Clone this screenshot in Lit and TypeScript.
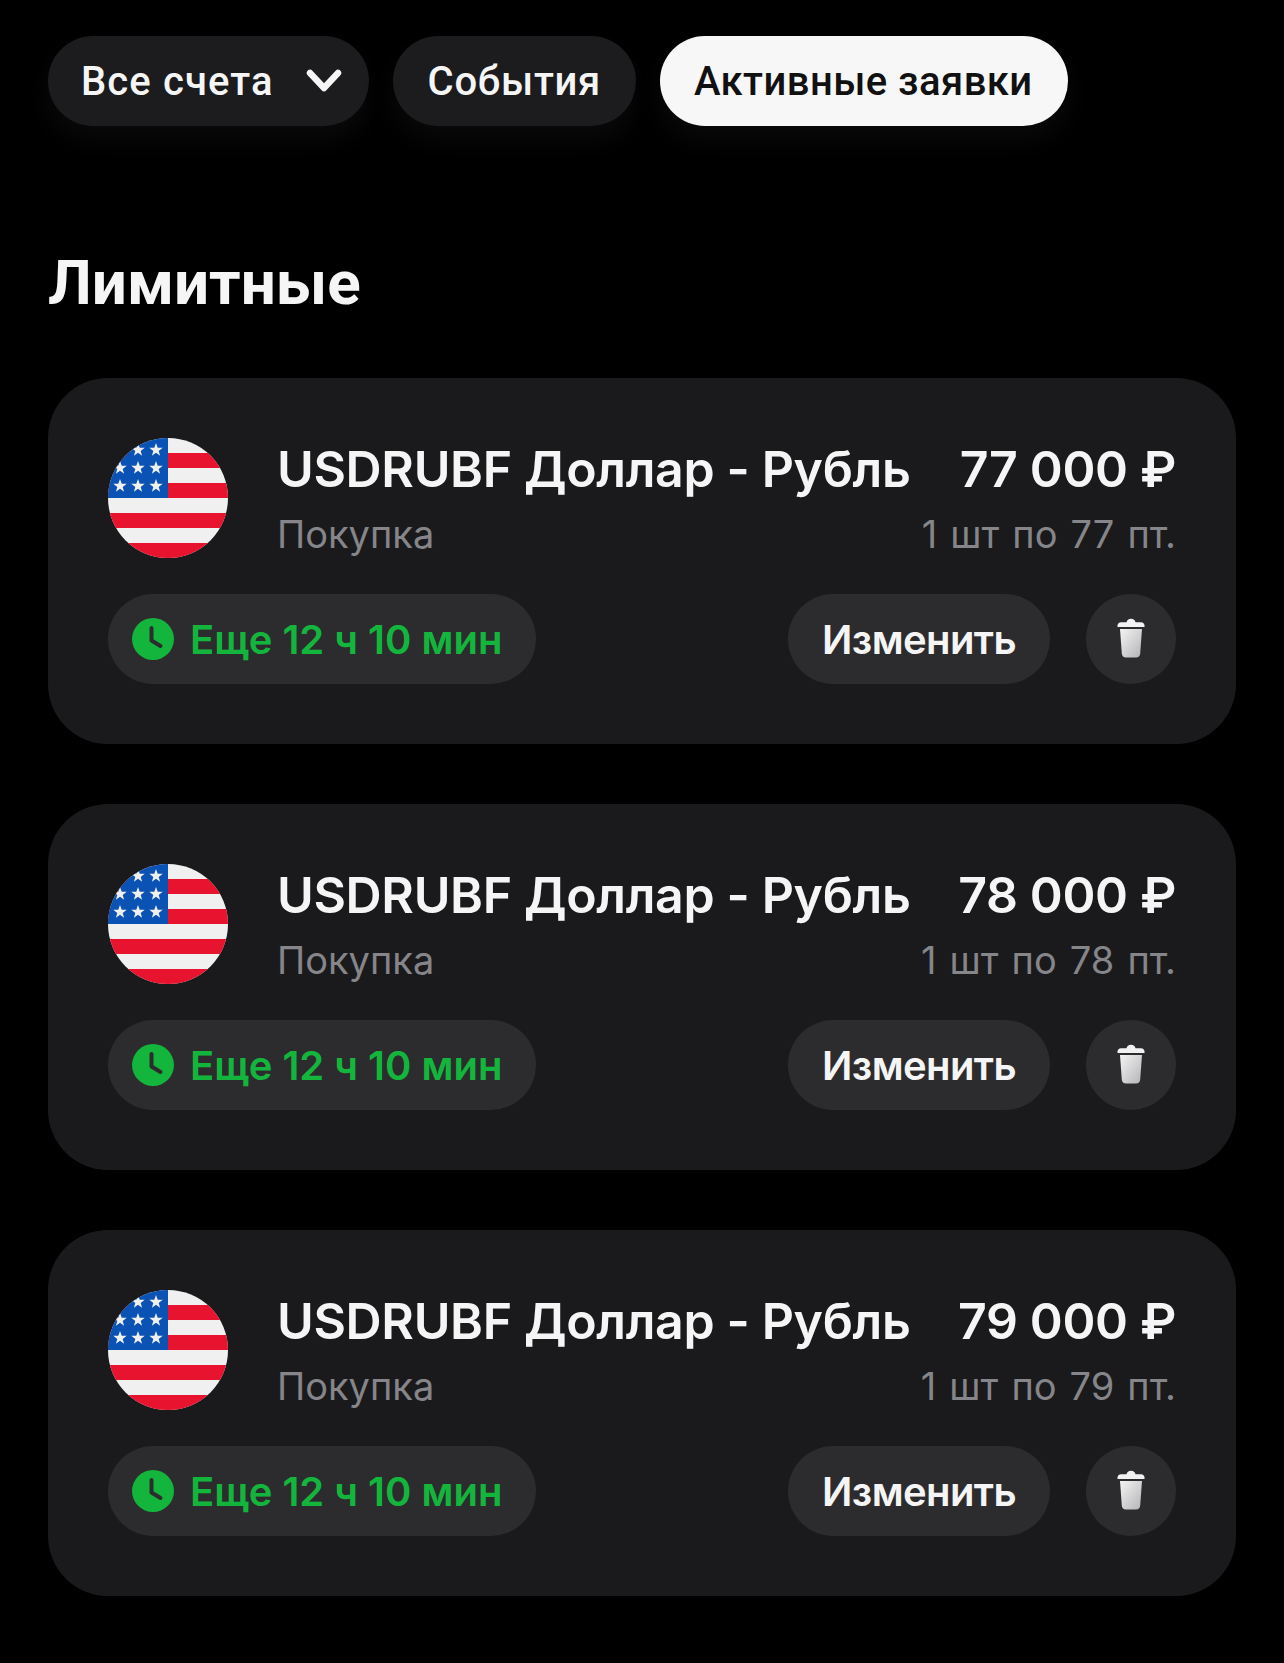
import { LitElement, css, html, svg } from 'lit'
import { customElement } from 'lit/decorators.js'

type Order = {
  total: string;
  detail: string;
}

const orders: Order[] = [
  { total: '77 000 ₽', detail: '1 шт по 77 пт.' },
  { total: '78 000 ₽', detail: '1 шт по 78 пт.' },
  { total: '79 000 ₽', detail: '1 шт по 79 пт.' },
]

const starPoints = '0,-7 1.7,-2.2 6.7,-2.2 2.7,0.9 4.1,5.7 0,2.8 -4.1,5.7 -2.7,0.9 -6.7,-2.2 -1.7,-2.2'
const stars = [[30, 12], [48, 12], [12, 30], [30, 30], [48, 30], [12, 48], [30, 48], [48, 48]]

const flag = html`
  <svg class="flag" viewBox="0 0 120 120" width="120" height="120">
    <defs><clipPath id="round"><circle cx="60" cy="60" r="60"></circle></clipPath></defs>
    <g clip-path="url(#round)">
      <rect width="120" height="120" fill="#f0f0f0"></rect>
      ${[15, 45, 75, 105].map(y => svg`<rect x="0" y=${y} width="120" height="15" fill="#e8132e"></rect>`)}
      <rect width="60" height="60" fill="#0a52b4"></rect>
      ${stars.map(([x, y]) => svg`<polygon transform="translate(${x} ${y})" points=${starPoints} fill="#f0f0f0"></polygon>`)}
    </g>
  </svg>
`

const clock = html`
  <svg class="clock" viewBox="0 0 42 42" width="42" height="42">
    <circle cx="21" cy="21" r="21" fill="#14b53c"></circle>
    <path d="M19.5 10V22.5l9 5.5" fill="none" stroke="#2c2c2e" stroke-width="4" stroke-linecap="round" stroke-linejoin="round"></path>
  </svg>
`

const trash = html`
  <svg viewBox="0 0 28 40" width="28" height="40">
    <defs>
      <linearGradient id="bin" x1="0" y1="0" x2="1" y2="1">
        <stop offset="0" stop-color="#f4f4f5"></stop>
        <stop offset="1" stop-color="#b4b4b6"></stop>
      </linearGradient>
    </defs>
    <path d="M0.5 7.5C0.5 5.5 2 4.5 4 4.2H9.5C10 2 11.5 0.8 14 0.8S18 2 18.5 4.2H24C26 4.5 27.5 5.5 27.5 7.5V9H0.5Z" fill="#f2f2f3"></path>
    <path d="M3 11H25L23.2 35.5C23 38 21.5 39.5 19 39.5H9C6.5 39.5 5 38 4.8 35.5Z" fill="url(#bin)"></path>
  </svg>
`

@customElement('app-root')
export default class AppRoot extends LitElement {
  render() {
    return html`
      <nav class="tabs">
        <button class="tab first">
          Все счета
          <svg viewBox="0 0 36 26" width="36" height="26">
            <path d="M4 5L18 20L32 5" fill="none" stroke="#f5f5f6" stroke-width="6.5" stroke-linecap="round" stroke-linejoin="round"></path>
          </svg>
        </button>
        <button class="tab">События</button>
        <button class="tab active">Активные заявки</button>
      </nav>
      <h1>Лимитные</h1>
      <section class="list">
        ${orders.map(order => html`
          <article class="card">
            <div class="top">
              ${flag}
              <div class="info">
                <div class="line">
                  <span class="title">USDRUBF Доллар - Рубль</span>
                  <span class="title">${order.total}</span>
                </div>
                <div class="line">
                  <span class="sub">Покупка</span>
                  <span class="sub detail">${order.detail}</span>
                </div>
              </div>
            </div>
            <div class="bottom">
              <div class="timer">${clock}<span>Еще 12 ч 10 мин</span></div>
              <button class="change">Изменить</button>
              <button class="remove" aria-label="Удалить">${trash}</button>
            </div>
          </article>
        `)}
      </section>
    `
  }

  static styles = css`
:host {
  display: block;
  min-height: 1663px;
  box-sizing: border-box;
  padding: 36px 48px 0;
  background: #000;
  color: #f5f5f6;
  font-family: Inter, "Liberation Sans", sans-serif;
}
button {
  border: none;
  font-family: inherit;
  color: inherit;
  cursor: pointer;
}
.tabs {
  display: flex;
  gap: 24px;
}
.tab {
  display: flex;
  align-items: center;
  gap: 32px;
  height: 90px;
  padding: 0 35px;
  border-radius: 45px;
  background: #1c1c1e;
  box-shadow: 0 14px 28px rgba(36, 36, 38, 0.28);
  font-family: Roboto, sans-serif;
  font-size: 40px;
  font-weight: 500;
  letter-spacing: 0.7px;
}
.tab.first {
  padding: 0 27px 0 33px;
  letter-spacing: 1.1px;
}
.tab.active {
  padding: 0 35px 0 34px;
  background: #f7f7f8;
  color: #111;
  letter-spacing: 0.45px;
}
h1 {
  margin: 122px 0 0;
  font-family: Roboto, sans-serif;
  font-size: 62px;
  font-weight: 700;
  line-height: 70px;
  color: #f5f5f6;
}
.list {
  display: flex;
  flex-direction: column;
  gap: 60px;
  margin-top: 60px;
}
.card {
  display: flex;
  flex-direction: column;
  gap: 36px;
  padding: 60px;
  border-radius: 60px;
  background: #1a1a1c;
}
.top {
  display: flex;
  gap: 49px;
}
.flag {
  flex: none;
}
.info {
  flex: 1;
  display: flex;
  flex-direction: column;
  gap: 10px;
}
.line {
  display: flex;
  justify-content: space-between;
  align-items: baseline;
}
.title {
  font-size: 50px;
  font-weight: 600;
  letter-spacing: -0.35px;
  line-height: 62px;
  white-space: nowrap;
}
.sub {
  font-size: 38px;
  line-height: 48px;
  color: #85858a;
  white-space: nowrap;
}
.detail {
  word-spacing: 2.4px;
}
.bottom {
  display: flex;
  align-items: center;
}
.timer {
  display: flex;
  align-items: center;
  gap: 16px;
  height: 90px;
  margin-right: auto;
  padding: 0 34px 0 24px;
  border-radius: 45px;
  background: #2c2c2e;
  color: #14b53c;
  font-size: 40px;
  font-weight: 600;
}
.change {
  height: 90px;
  padding: 0 34px;
  border-radius: 45px;
  background: #2c2c2e;
  font-size: 40px;
  font-weight: 600;
  letter-spacing: -0.6px;
}
.remove {
  display: flex;
  align-items: center;
  justify-content: center;
  width: 90px;
  height: 90px;
  margin-left: 36px;
  padding: 0 0 3px;
  border-radius: 50%;
  background: #2c2c2e;
}
`
}

declare global {
  interface HTMLElementTagNameMap {
    'app-root': AppRoot
  }
}
